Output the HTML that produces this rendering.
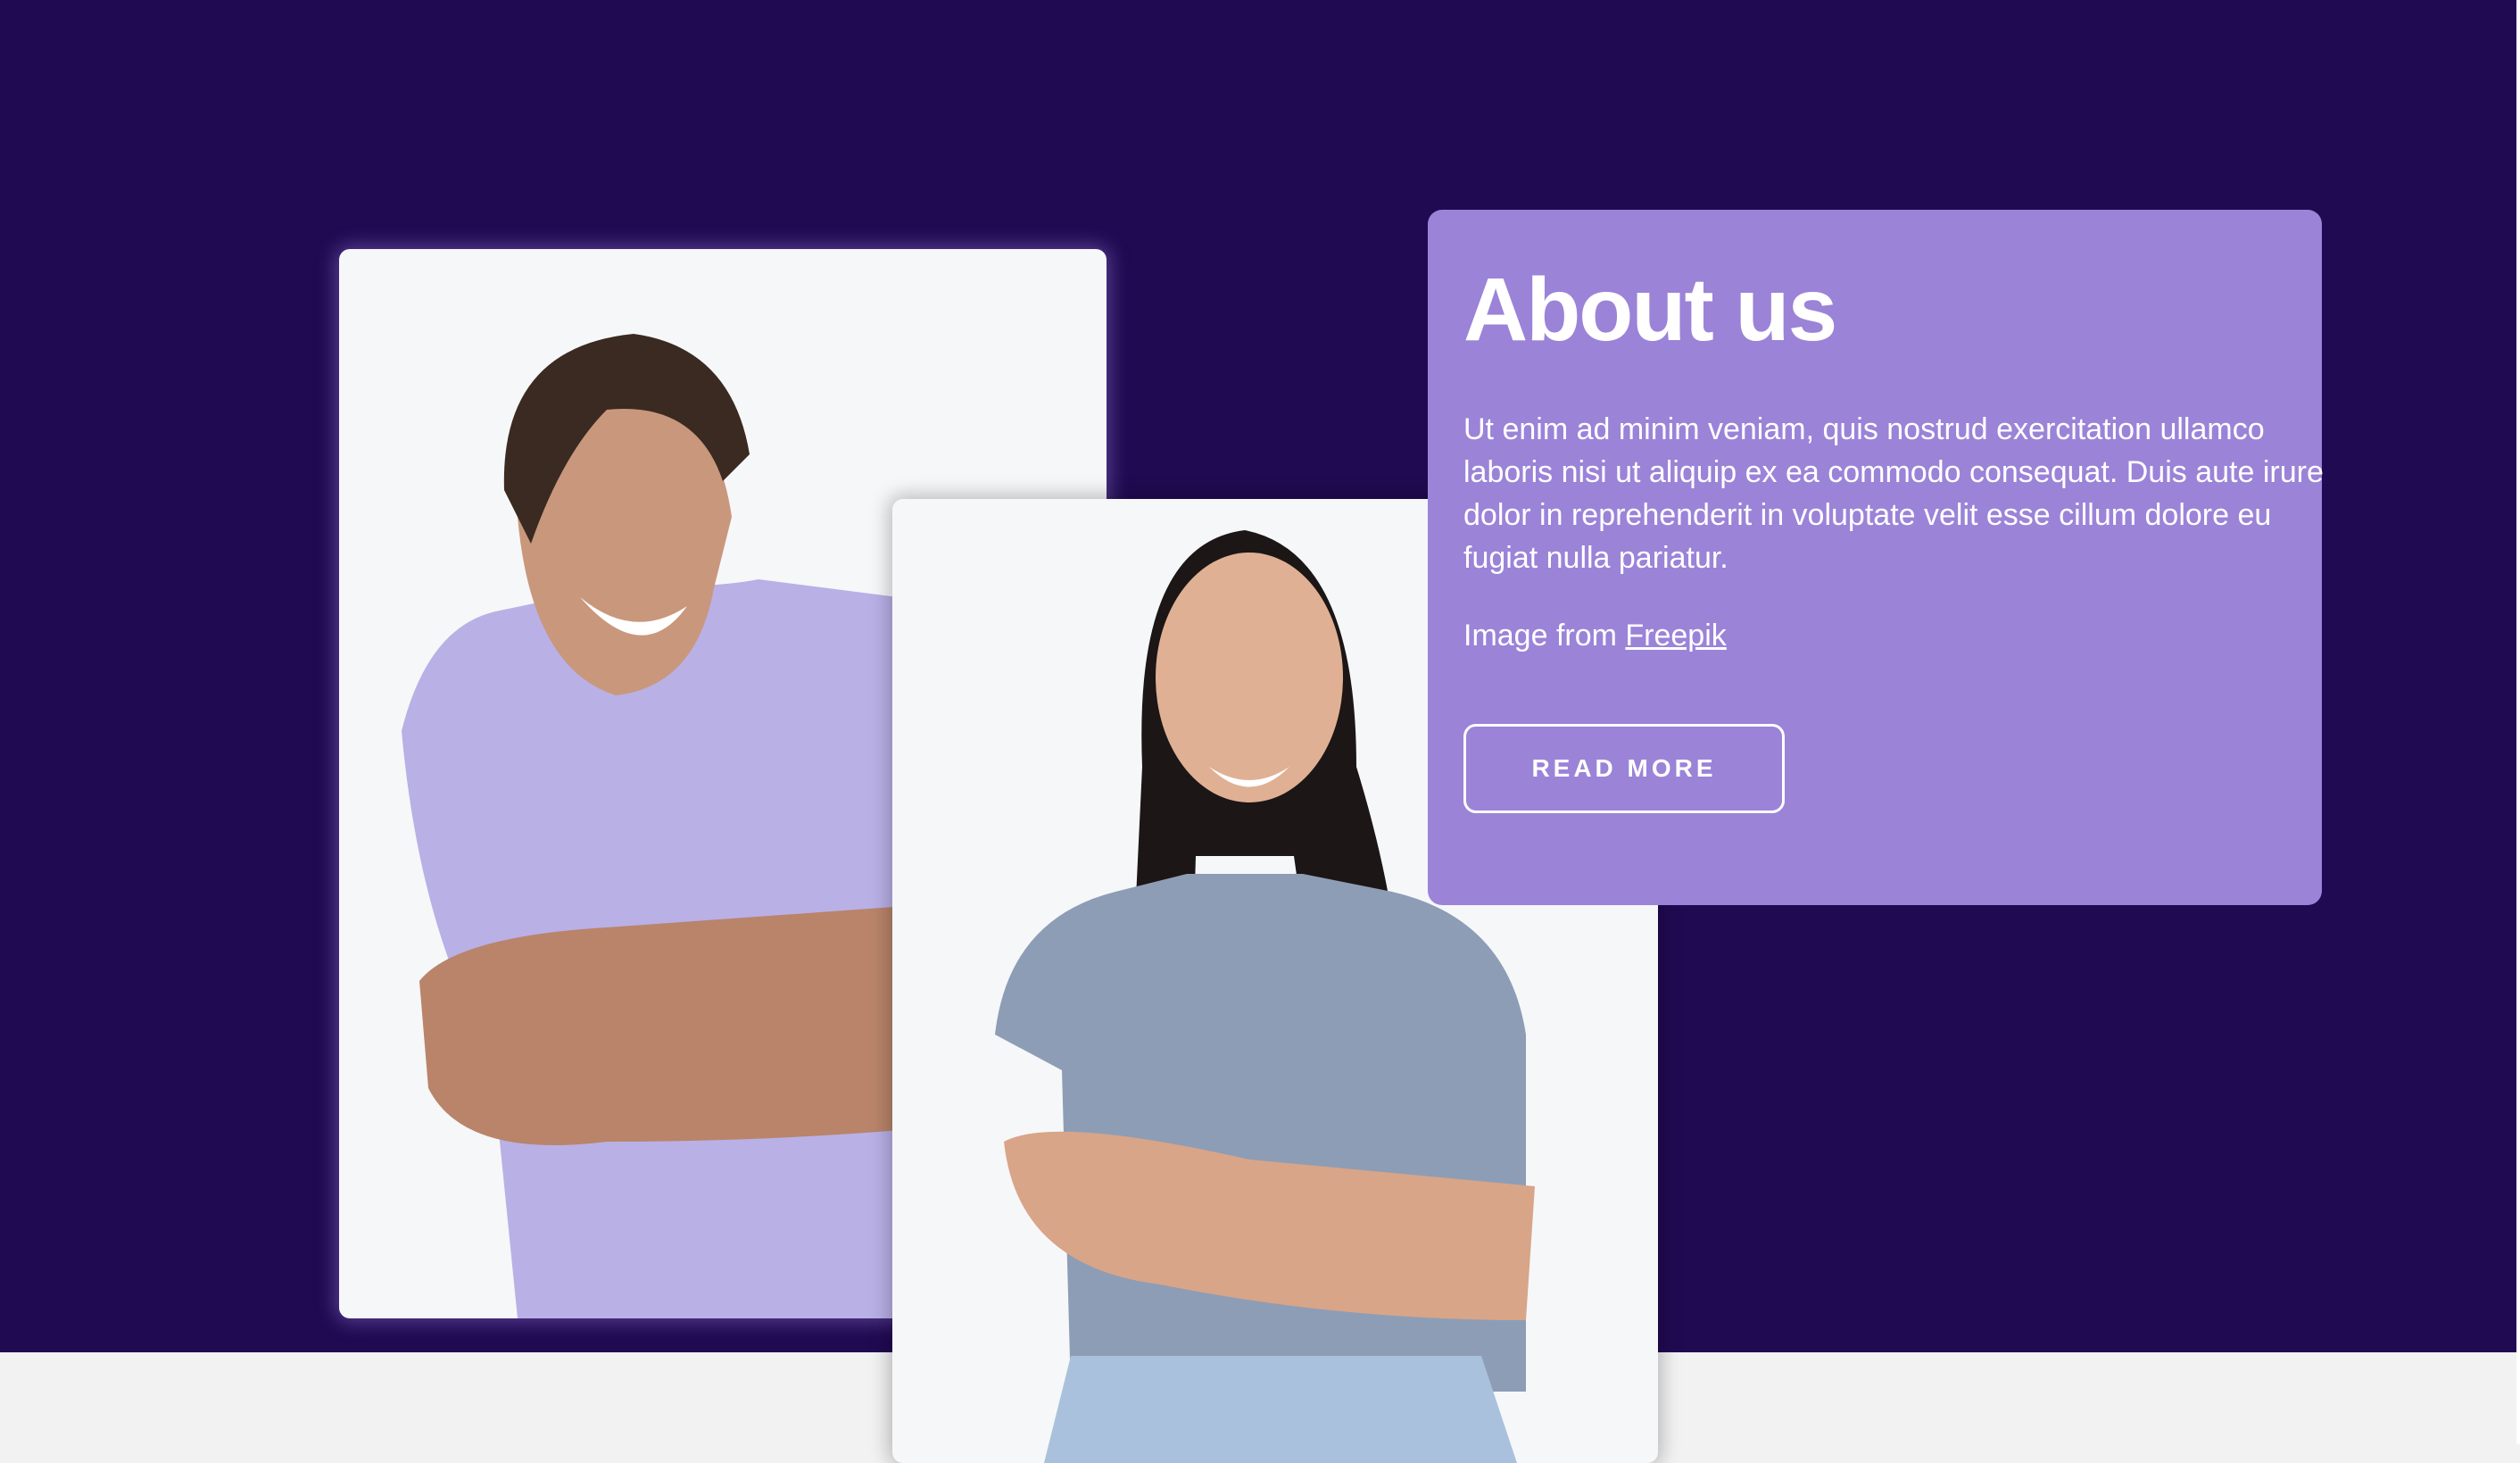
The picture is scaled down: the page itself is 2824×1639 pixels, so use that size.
<!DOCTYPE html>
<html><head><meta charset="utf-8"><style>
html,body{margin:0;padding:0}
body{width:2824px;height:1618px;position:relative;overflow:hidden;background:#f2f2f2;font-family:"Liberation Sans",sans-serif}
.bg{position:absolute;left:0;top:0;width:2824px;height:1515px;background:#200a52}
.strip{position:absolute;right:0;top:0;width:4px;height:1618px;background:#fff}
.card{position:absolute;background:#f6f7f9;border-radius:12px;overflow:hidden}
#c1{left:380px;top:279px;width:860px;height:1198px;box-shadow:0 0 22px 4px rgba(190,160,255,.35)}
#c2{left:1000px;top:559px;width:858px;height:1080px;box-shadow:0 0 22px 4px rgba(0,0,0,.25)}
.box{position:absolute;left:1600px;top:235px;width:1002px;height:779px;background:#9b83d8;border-radius:16px;color:#fff}
h1{position:absolute;left:40px;top:62px;margin:0;font-size:100px;font-weight:bold;letter-spacing:-2px;line-height:1}
.p{position:absolute;left:40px;top:222px;font-size:34px;line-height:48px;white-space:nowrap;letter-spacing:0}
.img{position:absolute;left:40px;top:458px;font-size:34px}
.img u{text-decoration:underline}
.btn{position:absolute;left:40px;top:576px;width:360px;height:100px;border:3px solid #fff;border-radius:14px;box-sizing:border-box;text-align:center;line-height:94px;font-weight:bold;font-size:28px;letter-spacing:4px}
</style></head><body>
<div class="bg"></div>
<div class="card" id="c1">
<svg width="860" height="1198" viewBox="0 0 860 1198">
<path d="M70 540 Q100 420 180 405 L300 380 Q420 380 470 370 L860 420 L860 1198 L200 1198 L170 900 Q90 760 70 540Z" fill="#b9b0e6"/>
<path d="M90 820 Q130 770 300 760 L860 720 L860 960 Q600 1000 300 1000 Q140 1020 100 940Z" fill="#b9846a"/>
<path d="M200 300 Q215 470 310 500 Q400 490 420 380 L440 300 Q420 160 300 150 Q190 170 200 300Z" fill="#c9977c"/>
<path d="M185 270 Q180 110 330 95 Q440 110 460 230 L430 260 Q400 170 300 180 Q250 230 215 330Z" fill="#3a2a22"/>
<path d="M270 390 Q330 440 390 400 Q340 470 270 390Z" fill="#fff"/>
</svg>
</div>
<div class="card" id="c2">
<svg width="858" height="1080" viewBox="0 0 858 1080">
<path d="M395 35 Q270 50 280 300 L260 720 L330 740 L340 400 L450 400 L500 755 L560 760 Q600 560 520 300 Q520 60 395 35Z" fill="#1c1616"/>
<path d="M115 600 Q130 470 250 440 L330 420 L460 420 L560 440 Q690 470 710 600 L710 1000 L200 1000 L190 640Z" fill="#8d9db6"/>
<path d="M125 720 Q180 690 400 740 L720 770 L710 920 Q500 920 300 880 Q140 860 125 720Z" fill="#d8a588"/>
<ellipse cx="400" cy="200" rx="105" ry="140" fill="#e0b094"/>
<path d="M355 300 Q400 330 445 300 Q400 345 355 300Z" fill="#fff"/>
<path d="M200 960 L660 960 L700 1080 L170 1080Z" fill="#a9c1dc"/>
</svg>
</div>
<div class="box">
<h1>About us</h1>
<div class="p">Ut enim ad minim veniam, quis nostrud exercitation ullamco<br>laboris nisi ut aliquip ex ea commodo consequat. Duis aute irure<br>dolor in reprehenderit in voluptate velit esse cillum dolore eu<br>fugiat nulla pariatur.</div>
<div class="img">Image from <u>Freepik</u></div>
<div class="btn">READ MORE</div>
</div>
<div class="strip"></div>
</body></html>
